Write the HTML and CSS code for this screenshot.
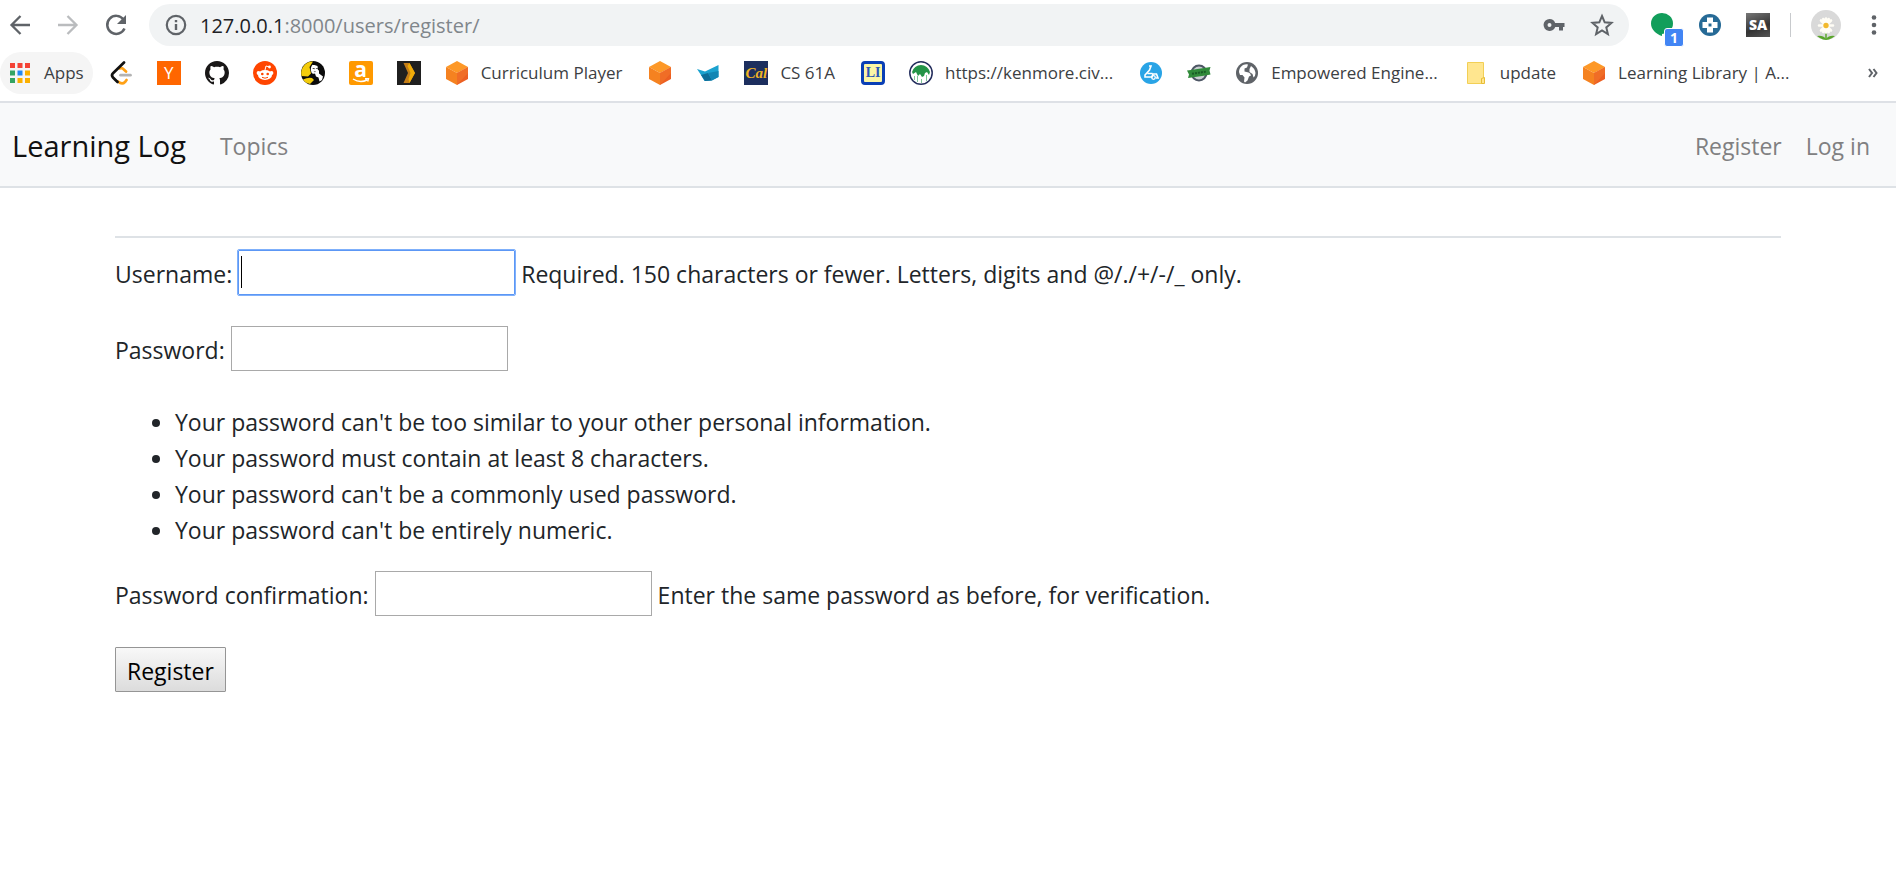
FILE: index.html
```html
<!DOCTYPE html>
<html lang="en">
<head>
<meta charset="utf-8">
<title>Learning Log</title>
<link rel="stylesheet" href="styles.css">
</head>
<body>
<svg class="defs" aria-hidden="true">
  <symbol id="cube" viewBox="0 0 24 24">
    <path fill="#fd9827" d="M12 0 23 6 12 12 1 6z"/>
    <path fill="#f58220" d="M1 6l11 6v12L1 18z"/>
    <path fill="#ec5f22" d="M23 6l-11 6v12l11-6z"/>
    <path fill="#f4772a" d="M12 12l11-6v6L12 24z" opacity=".6"/>
  </symbol>
</svg>

<header class="browser">
  <div class="toolbar">
    <button class="tool" aria-label="Back"><svg width="24" height="24" viewBox="0 0 24 24" fill="none" stroke="#5f6368" stroke-width="2.300"><path d="M22 12H4M12.500 3 3.500 12l9 9"/></svg></button>
    <button class="tool" aria-label="Forward"><svg width="24" height="24" viewBox="0 0 24 24" fill="none" stroke="#babcbe" stroke-width="2.300"><path d="M2 12h18M11.500 3l9 9-9 9"/></svg></button>
    <button class="tool" aria-label="Reload"><svg width="24" height="24" viewBox="0 0 24 24"><path d="M19.500 6.500A9 9 0 1 0 20.500 15.500" fill="none" stroke="#5f6368" stroke-width="2.500"/><path d="M22 2v9h-9z" fill="#5f6368"/></svg></button>
    <div class="address">
      <svg width="24" height="24" viewBox="0 0 24 24"><circle cx="12" cy="12" r="9.200" fill="none" stroke="#5f6368" stroke-width="2.200"/><path d="M10.800 7h2.400v2.300h-2.400zM10.800 11h2.400v6h-2.400z" fill="#5f6368"/></svg>
      <span class="url"><span class="host">127.0.0.1</span>:8000/users/register/</span>
      <svg width="24" height="24" viewBox="0 0 24 24"><path fill="#5f6368" fill-rule="evenodd" d="M7.500 6a6 6 0 1 0 5.700 8H17v3.500h4V14h1.500v-4h-9.300A6 6 0 0 0 7.500 6zm0 4a2 2 0 1 1 0 4 2 2 0 0 1 0-4z"/></svg>
      <svg width="24" height="24" viewBox="0 0 24 24"><path fill="none" stroke="#5f6368" stroke-width="2" d="M12 3l2.700 6.300 6.800.6-5.200 4.500 1.600 6.700-5.900-3.600-5.900 3.600 1.600-6.700L2.500 9.900l6.800-.6z"/></svg>
    </div>
    <div class="extensions">
      <button class="ext" aria-label="Extension, 1 notification"><svg width="24" height="24" viewBox="0 0 24 24"><path fill="#129e5b" d="M12 0a11 10.500 0 1 1 0 21v2C6 21 1 16.500 1 10.500A11 10.500 0 0 1 12 0z"/></svg><span class="badge">1</span></button>
      <button class="ext" aria-label="Extension"><svg width="24" height="24" viewBox="0 0 24 24"><circle cx="12" cy="12" r="11" fill="#266a96"/><path fill="#fff" d="M9 4.500h6V9h4.500v6H15v4.500H9V15H4.500V9H9z"/><path fill="#266a96" d="M10.500 10.500h3v3h-3z"/></svg></button>
      <button class="ext sa" aria-label="SA extension">SA</button>
      <span class="divider"></span>
      <button class="avatar" aria-label="Profile"><svg width="30" height="30" viewBox="0 0 30 30">
        <circle cx="15" cy="15" r="15" fill="#d9d9d9"/>
        <path d="M15 20v9" stroke="#5aa62b" stroke-width="1.500"/>
        <path d="M15 29q-3-4-9-3 3 2.500 6 3.500 3 .8 6 0 3-1 6-3.500-6-1-9 3z" fill="#5aa62b"/>
        <g stroke="#fffdf5" stroke-width="2.600" stroke-linecap="round"><path d="M15 8.500v14M8 15.500h14M10 10.500l10 10M20 10.500l-10 10M12.300 9l5.400 13M17.700 9l-5.400 13"/></g>
        <circle cx="15" cy="15.500" r="2.700" fill="#f2b92d"/></svg></button>
      <button class="menu" aria-label="Menu"><svg width="6" height="24" viewBox="0 0 6 24" fill="#5f6368"><circle cx="3" cy="4.500" r="2.300"/><circle cx="3" cy="12" r="2.300"/><circle cx="3" cy="19.500" r="2.300"/></svg></button>
    </div>
  </div>

  <nav class="bookmarks" aria-label="Bookmarks">
    <a class="mark apps" href="#"><svg width="20" height="20" viewBox="0 0 20 20"><path fill="#f44336" d="M0 0h5v5H0zM7.500 0h5v5h-5zM15 0h5v5h-5z"/><path fill="#34a462" d="M0 7.500h5v5H0zM0 15h5v5H0z"/><path fill="#2389f0" d="M7.500 7.500h5v5h-5z"/><path fill="#fbb000" d="M15 7.500h5v5h-5zM7.500 15h5v5h-5zM15 15h5v5h-5z"/></svg>Apps</a>
    <a class="mark" href="#" aria-label="LeetCode"><svg width="24" height="24" viewBox="0 0 24 24" fill="none" stroke-width="2.700" stroke-linecap="round"><path stroke="#ffa116" d="M11 7.500q1.500-1 3 .3l3 2.700M9 20.500q4 3.500 7 .5l1.500-2"/><path stroke="#b3b3b3" d="M11.500 14.200h10"/><path stroke="#111" d="M15 1.500 4 12.300q-2 2 0 4.200l4.500 4.500"/></svg></a>
    <a class="mark" href="#" aria-label="Hacker News"><span class="tile ycomb">Y</span></a>
    <a class="mark" href="#" aria-label="GitHub"><svg width="24" height="24" viewBox="0 0 16 16"><path fill="#191717" d="M8 0C3.580 0 0 3.580 0 8c0 3.540 2.290 6.530 5.470 7.590.4.070.55-.17.55-.38 0-.19-.01-.82-.01-1.490-2.010.37-2.530-.49-2.690-.94-.09-.23-.48-.94-.82-1.130-.28-.15-.68-.52-.01-.53.63-.01 1.080.58 1.230.82.72 1.210 1.870.87 2.330.66.070-.52.28-.87.51-1.070-1.780-.2-3.640-.89-3.640-3.950 0-.87.31-1.590.82-2.150-.08-.2-.36-1.020.08-2.120 0 0 .67-.21 2.200.82.64-.18 1.320-.27 2-.27s1.360.09 2 .27c1.530-1.040 2.200-.82 2.200-.82.44 1.100.16 1.920.08 2.120.51.56.82 1.270.82 2.150 0 3.070-1.870 3.750-3.650 3.950.29.25.54.73.54 1.480 0 1.070-.01 1.930-.01 2.200 0 .21.15.46.55.38A8.010 8.010 0 0 0 16 8c0-4.420-3.580-8-8-8z"/></svg></a>
    <a class="mark" href="#" aria-label="Reddit"><svg width="24" height="24" viewBox="0 0 24 24"><circle cx="12" cy="12" r="12" fill="#ff4500"/><g fill="#fff"><ellipse cx="12" cy="14" rx="7" ry="5"/><circle cx="5.500" cy="12" r="1.900"/><circle cx="18.500" cy="12" r="1.900"/><circle cx="16.500" cy="6" r="1.400"/></g><path d="M12 9l1-4 3.500 1" fill="none" stroke="#fff"/><circle cx="9.300" cy="13" r="1.300" fill="#ff4500"/><circle cx="14.700" cy="13" r="1.300" fill="#ff4500"/><path d="M9 16.300q3 1.800 6 0" fill="none" stroke="#ff4500"/></svg></a>
    <a class="mark" href="#" aria-label="Portrait"><svg width="24" height="24" viewBox="0 0 24 24"><circle cx="12" cy="12" r="12" fill="#0b0b0b"/><path fill="#f3cc0c" d="M12 .5A11.500 11.500 0 0 0 .6 15l6.400.5 3-3L8.500 6z"/><path fill="#fff" d="M12 3q-3.500 4-1.500 8.500 1 2 3.500 1l1 3 2.500 1 1 4 2.500-1.500 1-3.500-4-3V6l-2.500-3z"/><path fill="#f3cc0c" d="M2 18.500q5-2.500 9-1.500l2 2-4 4Q4 22 2 18.500z"/><path fill="#0b0b0b" d="M10.500 4q5-4.500 8.500 1v5l-2-1-.5-4-3-1zM11 7.500l2.500-.5v1.200zM14.500 7.300l2-.3v1.200zM12.500 10.500h2.500l-1 .8z"/></svg></a>
    <a class="mark" href="#" aria-label="Amazon"><span class="tile amazon">a<svg class="smile" width="18" height="5" viewBox="0 0 18 5"><path d="M1 1q7 4.500 14 1M13 .8l3.500-.3-.8 3" fill="none" stroke="#fff" stroke-width="1.400"/></svg></span></a>
    <a class="mark" href="#" aria-label="Plex"><svg width="24" height="24" viewBox="0 0 24 24"><path fill="#1f1f1f" d="M0 0h24v24H0z"/><path fill="#c47d17" d="M6.500 2h6l5.500 10-5.500 10h-6L11 12z"/><path fill="#eeab09" d="M12.500 2 18 12l-5.500 10-1-4 2-6-3-7z"/></svg></a>
    <a class="mark titled" href="#"><svg width="24" height="24"><use href="#cube"/></svg>Curriculum Player</a>
    <a class="mark" href="#" aria-label="Cube"><svg width="24" height="24"><use href="#cube"/></svg></a>
    <a class="mark" href="#" aria-label="Fox"><svg width="24" height="24" viewBox="0 0 24 24"><path fill="#1ba2cf" d="M1 8l8 2.500L22.500 4v12l-7 3.500-7 .5L5 14z"/><path fill="#0d6d98" d="M5 14l7-2 4 7.500-7 .5z"/><path fill="#1286b4" d="M12 12 22.500 10v6l-6.500 3.500z"/></svg></a>
    <a class="mark titled" href="#"><span class="tile cal">Cal</span>CS 61A</a>
    <a class="mark" href="#" aria-label="LI"><span class="tile li">LI</span></a>
    <a class="mark titled" href="#"><svg width="24" height="24" viewBox="0 0 24 24"><circle cx="12" cy="12" r="11.200" fill="#fff" stroke="#232d5c" stroke-width="1.500"/><path fill="#239447" d="M3 11a9.300 9.300 0 0 1 18 0l-1 3-2-3-2 1-1 3-2 1-2-3-2 2-2-4-3 2z"/><path fill="#7fc597" d="M5 15h1v4H5zM8 15h1v6H8zM12 18h1v4h-1zM17 14h1v6h-1z"/></svg>https://kenmore.civ...</a>
    <a class="mark" href="#" aria-label="Scooter"><svg width="24" height="24" viewBox="0 0 24 24"><circle cx="12" cy="12" r="11" fill="#29a4e6"/><path fill="none" stroke="#fff" stroke-width="1.600" d="M10 5h2l-1.500 4L6 14v2h7l1-3h3.500l1.500 4h-2M8.500 12.500h5"/><circle cx="14.500" cy="16.500" r="1.800" fill="none" stroke="#fff" stroke-width="1.300"/></svg></a>
    <a class="mark" href="#" aria-label="Seal"><svg width="24" height="24" viewBox="0 0 24 24"><circle cx="12" cy="12" r="7.500" fill="#c8cdd0" stroke="#4d5664" stroke-width="2"/><path fill="#2f8a39" d="M0 9.500l4-.5 19.500-3-1 3.500 1 4-5 1L1 17l1-3.500z"/><path stroke="#185c25" stroke-width="2" d="M5 12.800l14-2.200" stroke-dasharray="2 1"/></svg></a>
    <a class="mark titled" href="#"><svg width="24" height="24" viewBox="0 0 24 24"><circle cx="12" cy="12" r="11" fill="#5f6368"/><path fill="#fff" d="M4 11q0-4.500 4-7 3-1 5-.5l-1 3-2.500 1v3l4 1q2 .5 2.500 3l-2 1-1.500 4-2.500 2-1-1 .5-4-2-2.500H5z"/><path fill="#fff" d="M16 5q4 2.500 4.500 7 0 3-2 4.500l-1-3.500-3-2v-3z"/></svg>Empowered Engine...</a>
    <a class="mark titled" href="#"><svg width="24" height="24" viewBox="0 0 24 24"><path fill="#ffe68f" stroke="#f2cf55" d="M3.500 1.500h16v21h-16z"/><path fill="#ffe68f" stroke="#e8bd36" d="M17.500 17.500l3-1v6h-3z"/></svg>update</a>
    <a class="mark titled" href="#"><svg width="24" height="24"><use href="#cube"/></svg>Learning Library | A...</a>
    <button class="more" aria-label="More bookmarks"><svg width="10" height="10" viewBox="0 0 10 10" fill="none" stroke="#5f6368" stroke-width="2"><path d="M1 1l3 4-3 4M5.500 1l3 4-3 4"/></svg></button>
  </nav>
</header>

<nav class="navbar">
  <a class="brand" href="#">Learning Log</a>
  <a class="nav-link" href="#">Topics</a>
  <div class="account">
    <a class="nav-link" href="#">Register</a>
    <a class="nav-link" href="#">Log in</a>
  </div>
</nav>

<main class="container">
  <form class="form">
    <div class="field">
      <label for="username">Username:</label>
      <span class="focus-box"><input class="focused" id="username" type="text"><span class="caret"></span></span>
      <span class="help">Required. 150 characters or fewer. Letters, digits and @/./+/-/_ only.</span>
    </div>
    <div class="field">
      <label for="password1">Password:</label>
      <input id="password1" type="password">
    </div>
    <ul class="rules">
      <li>Your password can't be too similar to your other personal information.</li>
      <li>Your password must contain at least 8 characters.</li>
      <li>Your password can't be a commonly used password.</li>
      <li>Your password can't be entirely numeric.</li>
    </ul>
    <div class="field">
      <label for="password2">Password confirmation:</label>
      <input id="password2" type="password">
      <span class="help">Enter the same password as before, for verification.</span>
    </div>
    <button class="submit" type="button">Register</button>
  </form>
</main>
</body>
</html>
```
FILE: styles.css
```css
* { box-sizing: border-box; }

body {
  margin: 0;
  background: #fff;
  color: #212529;
  font: 23px/36px "Open Sans", "Noto Sans", sans-serif;
}

a { color: inherit; text-decoration: none; }
button { font: inherit; border: 0; padding: 0; background: none; }
svg { display: block; flex: none; }
.defs { position: absolute; width: 0; height: 0; }

/* Browser toolbar */
.browser { border-bottom: 2px solid #dee1e6; }
.toolbar {
  display: flex;
  align-items: center;
  padding: 4px 19px 0 8px;
}
.tool { margin-right: 24px; }
.address {
  flex: 1;
  display: flex;
  align-items: center;
  gap: 24px;
  height: 42px;
  margin-left: -3px;
  padding: 0 15px;
  border-radius: 21px;
  background: #f1f3f4;
}
.url {
  flex: 1;
  margin-left: -12px;
  padding-top: 2px;
  font-size: 20px;
  color: #80868b;
}
.host { color: #202124; }
.extensions {
  display: flex;
  align-items: center;
  gap: 24px;
  margin-left: 21px;
}
.ext { position: relative; width: 24px; height: 24px; }
.badge {
  position: absolute;
  left: 14px;
  top: 15px;
  width: 20px;
  height: 19px;
  border: 1px solid #fff;
  border-radius: 3px;
  background: #4285f4;
  color: #fff;
  font-size: 14px;
  font-weight: 700;
  line-height: 18px;
  text-align: center;
}
.sa {
  background: linear-gradient(160deg, #777, #333 60%, #555);
  color: #fff;
  font-size: 14px;
  font-weight: 800;
  line-height: 24px;
}
.divider { width: 1px; height: 24px; margin: 0 -4px; background: #c8cacd; }
.avatar { height: 30px; }
.menu { margin-left: 6px; }

/* Bookmarks bar */
.bookmarks {
  display: flex;
  align-items: center;
  padding: 6px 18px 7px 0;
  font-size: 17px;
  line-height: 24px;
  color: #3c4043;
}
.mark {
  display: flex;
  align-items: center;
  gap: 12px;
  height: 42px;
  padding: 0 12px;
  white-space: nowrap;
}
.titled { padding-right: 14px; }
.apps {
  gap: 14px;
  margin-right: 4px;
  padding: 0 9px 0 10px;
  border-radius: 21px;
  background: #f5f5f5;
}
.tile {
  position: relative;
  width: 24px;
  height: 24px;
  line-height: 24px;
  text-align: center;
  color: #fff;
}
.ycomb { background: #f60; }
.amazon {
  border-radius: 2px;
  background: #f90;
  font-size: 21px;
  font-weight: 700;
  line-height: 16px;
}
.smile { position: absolute; left: 3px; top: 17px; }
.cal {
  background: #1c2e5e;
  color: #f0b323;
  font: italic 700 15px/24px "Liberation Serif", serif;
}
.li {
  border: 3px solid #0a3fb5;
  border-radius: 4px;
  background: #fbf6a6;
  color: #2b55b8;
  font: 700 14px/18px "Liberation Serif", serif;
}
.more { margin-left: auto; }

/* Site navigation */
.navbar {
  display: flex;
  align-items: center;
  height: 85px;
  padding: 2px 26px 0 12px;
  border-bottom: 2px solid #dee2e6;
  background: #f8f9fa;
}
.brand { margin-right: 34px; font-size: 29px; color: #111; }
.nav-link { color: #808081; }
.account { display: flex; gap: 24px; margin-left: auto; }

/* Registration form */
.container {
  max-width: 1710px;
  margin: 0 auto;
  padding: 48px 22px 0;
}
.form {
  display: flex;
  flex-direction: column;
  gap: 31px;
  padding-top: 12px;
  border-top: 2px solid #dee2e6;
}
.field { display: flex; align-items: center; gap: 6px; }
.field label, .help { padding-top: 3px; }
.field input {
  display: block;
  width: 277px;
  height: 45px;
  padding: 2px;
  border: 1px solid #a9a9a9;
  border-radius: 0;
  background: #fff;
  font: inherit;
}
.focus-box { position: relative; }
.field .focused {
  border-color: #5c97f5;
  outline: 1px solid #7fb0fb;
  border-radius: 1px;
}
.caret {
  position: absolute;
  left: 3px;
  top: 6px;
  width: 1px;
  height: 32px;
  background: #000;
}
.rules { margin: 2px 0 -8px; padding-left: 60px; }
.submit {
  align-self: flex-start;
  height: 45px;
  padding: 3px 11px 0;
  border: 1px solid #959595;
  border-radius: 1px;
  background: linear-gradient(#f8f8f8, #dcdcdc);
  color: #000;
}
```
